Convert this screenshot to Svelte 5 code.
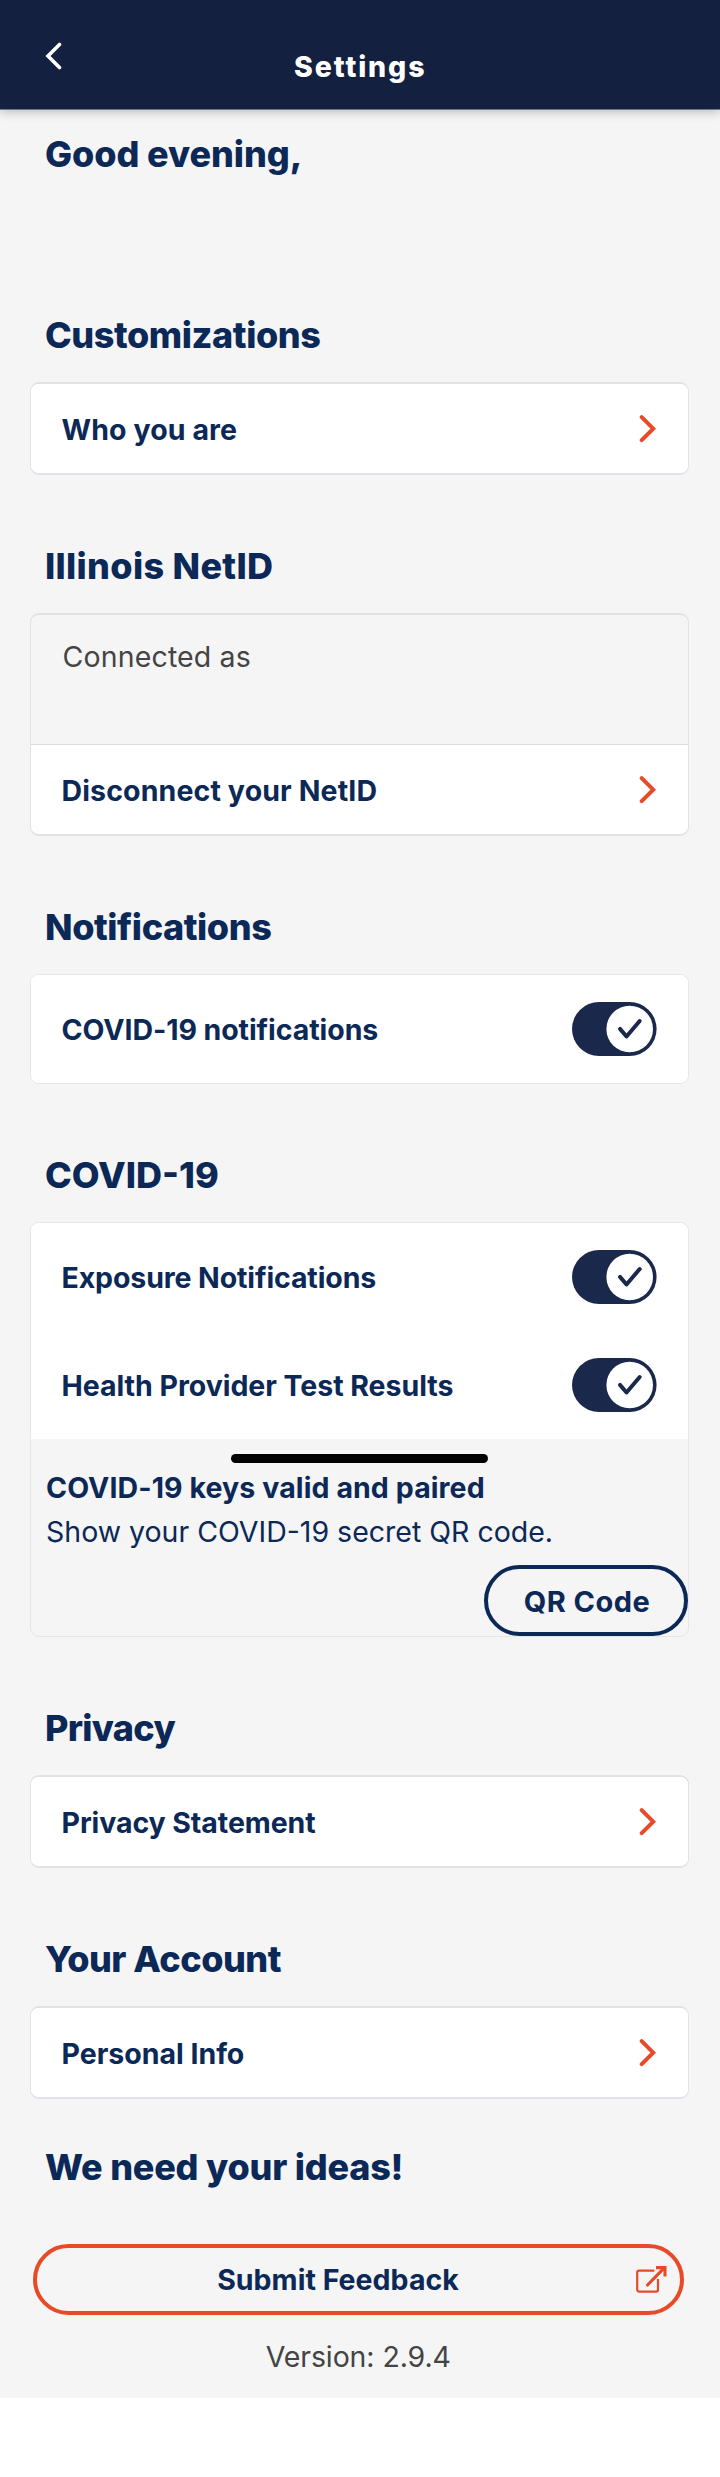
<script>
  const sections = [
    { title: 'Customizations', ls: -0.42, rows: [{ text: 'Who you are', ls: 0.09 }] },
    {
      title: 'Illinois NetID',
      ls: 0.31,
      connected: true,
      rows: [{ text: 'Disconnect your NetID', ls: 0.13 }]
    },
    {
      title: 'Notifications',
      ls: -0.42,
      rows: [{ text: 'COVID-19 notifications', ls: -0.07, toggle: true }]
    },
    {
      title: 'COVID-19',
      ls: 0,
      keys: true,
      rows: [
        { text: 'Exposure Notifications', ls: -0.12, toggle: true },
        { text: 'Health Provider Test Results', ls: -0.04, toggle: true }
      ]
    },
    { title: 'Privacy', ls: -0.7, rows: [{ text: 'Privacy Statement', ls: -0.09 }] },
    { title: 'Your Account', ls: -0.5, rows: [{ text: 'Personal Info', ls: -0.01 }] }
  ];
</script>

<div class="screen">
  <header>
    <svg class="back" width="18" height="30" viewBox="0 0 18 30">
      <path d="M15.5 3.5 4 15l11.5 11.5" fill="none" stroke="#fff" stroke-width="3.6" stroke-linecap="round" />
    </svg>
    <h1>Settings</h1>
  </header>

  <main>
    <h2 class="greeting">Good evening,</h2>

    {#each sections as s}
      <section>
        <h2 style="letter-spacing: {s.ls}px">{s.title}</h2>
        <div class="card" class:soft={s.rows[0].toggle} class:tinted={s.connected || s.keys}>
          {#if s.connected}
            <p class="connected">Connected as</p>
          {/if}
          {#each s.rows as row}
            <div class="row" class:tall={row.toggle}>
              <span style="letter-spacing: {row.ls}px">{row.text}</span>
              {#if row.toggle}
                <svg width="85" height="54" viewBox="0 0 85 54">
                  <rect width="84.6" height="54" rx="27" fill="#1a294b" />
                  <circle cx="57.7" cy="27" r="23.3" fill="#fff" />
                  <path d="M48 26.9 54.5 34.5 67.7 19" fill="none" stroke="#1a294b" stroke-width="4" stroke-linecap="round" stroke-linejoin="round" />
                </svg>
              {:else}
                <svg width="18" height="30" viewBox="0 0 18 30">
                  <path d="M2.7 3.2 14.2 14.7 2.7 26.2" fill="none" stroke="#e84a27" stroke-width="4" stroke-linecap="round" />
                </svg>
              {/if}
            </div>
          {/each}
          {#if s.keys}
            <div class="keys">
              <div class="home-bar"></div>
              <strong>COVID-19 keys valid and paired</strong>
              <p>Show your COVID-19 secret QR code.</p>
              <button class="qr">QR Code</button>
            </div>
          {/if}
        </div>
      </section>
    {/each}

    <h2 class="ideas">We need your ideas!</h2>
    <button class="feedback">
      <span>Submit Feedback</span>
      <svg width="32" height="28" viewBox="0 0 32 28" fill="none" stroke="#e84a27">
        <path d="M19.3 5.6H4a1.8 1.8 0 0 0-1.8 1.8v17.4A1.8 1.8 0 0 0 4 26.6h17.2a1.8 1.8 0 0 0 1.8-1.8V14" stroke-width="2.2" />
        <path d="M12.5 20 28.5 3.700" stroke-width="3.100" stroke-linecap="round" />
        <path d="M21 2.600h9v9" stroke-width="3.100" />
      </svg>
    </button>
    <p class="version">Version: 2.9.4</p>
  </main>
</div>

<style>
  :global(body) {
    background: #fff;
  }
  .screen {
    width: 720px;
    height: 2477px;
    font-family: Inter, "Liberation Sans", sans-serif;
    font-size: 28.5px;
    color: #0b2857;
  }
  h1, h2, p {
    margin: 0;
  }
  header {
    position: relative;
    box-sizing: border-box;
    height: 110px;
    padding: 40.5px 44px 0 44px;
    display: grid;
    grid-template-columns: 18px 1fr 18px;
    align-items: start;
    background: #142040;
    border-bottom: 1px solid #6b7886;
    box-shadow: 0 2px 10px rgba(0, 0, 0, 0.24);
  }
  h1 {
    margin-top: 8px;
    padding-left: 0.5px;
    font-size: 28.5px;
    line-height: 36px;
    font-weight: 800;
    letter-spacing: 1.87px;
    text-align: center;
    color: #fff;
  }
  main {
    box-sizing: border-box;
    height: 2287.5px;
    padding: 21px 31.5px 0 30px;
    background: #f5f5f5;
  }
  h2 {
    padding-left: 15px;
    font-size: 36px;
    line-height: 46px;
    font-weight: 800;
    white-space: nowrap;
  }
  .greeting {
    margin-bottom: 135px;
    letter-spacing: -0.08px;
  }
  section {
    margin-bottom: 68px;
  }
  .card {
    box-sizing: border-box;
    margin-top: 24px;
    border: 1px solid #e1e2e7;
    border-width: 2px 1px;
    border-radius: 9px;
    background: #fff;
  }
  .soft {
    border-width: 1px;
    border-color: #e6e6e7;
  }
  .tinted {
    background: #f5f5f5;
  }
  .connected {
    box-sizing: border-box;
    height: 130px;
    padding: 24px 31.5px 0;
    line-height: 36px;
    letter-spacing: 0.15px;
    color: #444;
    border-bottom: 1px solid #d9dbe0;
  }
  .row {
    display: flex;
    align-items: center;
    justify-content: space-between;
    height: 89px;
    padding: 0 30.5px 0 30.5px;
    background: #fff;
    border-radius: 0 0 8px 8px;
    font-weight: 700;
    white-space: nowrap;
  }
  .row span {
    padding-top: 1px;
  }
  .row:first-child {
    border-radius: 8px;
  }
  .row.tall {
    height: 108px;
  }
  .tinted .row.tall {
    border-radius: 8px 8px 0 0;
  }
  .tinted .row.tall + .row.tall {
    border-radius: 0;
  }
  .keys {
    position: relative;
    height: 197px;
    box-sizing: border-box;
    padding: 27px 0 0 15px;
    line-height: 44px;
    display: flex;
    flex-direction: column;
    white-space: nowrap;
  }
  .keys strong {
    letter-spacing: 0.1px;
  }
  .keys p {
    letter-spacing: 0;
  }
  .home-bar {
    position: absolute;
    left: 200px;
    top: 15px;
    width: 257px;
    height: 9px;
    border-radius: 5px;
    background: #000;
  }
  button {
    box-sizing: border-box;
    font: 700 28.5px/36px Inter, "Liberation Sans", sans-serif;
    color: #0b2857;
    background: none;
  }
  .qr {
    align-self: flex-end;
    width: 204px;
    height: 71px;
    margin-top: 11px;
    margin-right: -0.5px;
    flex-shrink: 0;
    padding: 2px 0 0 2px;
    border: 4px solid #0b2857;
    border-radius: 36px;
    font-size: 29px;
    letter-spacing: 0.5px;
  }
  .ideas {
    margin-top: -23px;
    letter-spacing: -0.22px;
  }
  .feedback {
    display: flex;
    align-items: center;
    width: 651px;
    height: 71px;
    margin: 54px 0 0 3px;
    padding: 0 13px 0 4px;
    border: 4px solid #e84a27;
    border-radius: 36px;
  }
  .feedback span {
    flex: 1;
    padding-top: 1px;
    letter-spacing: 0.03px;
  }
  .feedback svg {
    margin-top: -2px;
  }
  .version {
    margin-top: 24px;
    line-height: 36px;
    letter-spacing: -0.1px;
    padding-right: 2px;
    text-align: center;
    color: #444;
  }
</style>
